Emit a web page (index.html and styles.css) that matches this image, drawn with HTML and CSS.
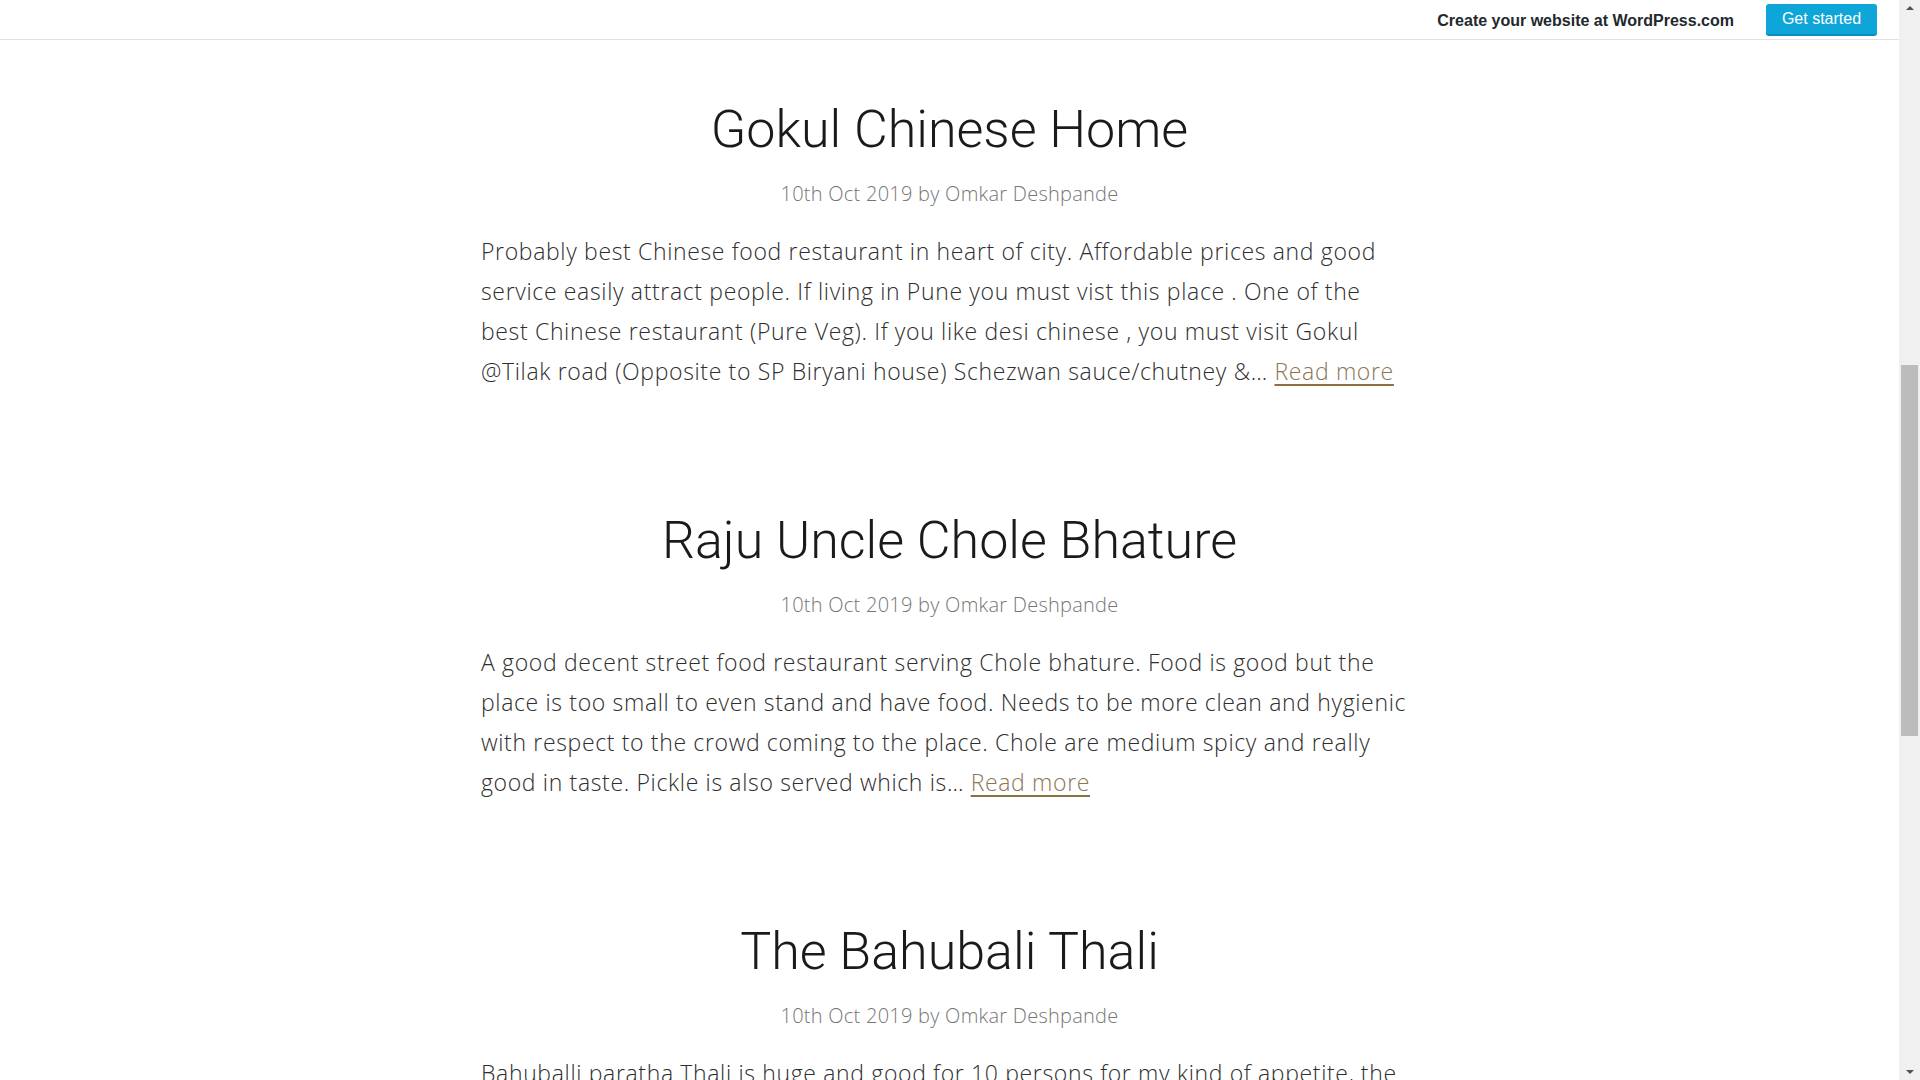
FILE: index.html
```html
<!DOCTYPE html>
<html lang="en">
<head>
<meta charset="utf-8">
<title>Omkar Deshpande – Food reviews</title>
<link rel="stylesheet" href="styles.css">
</head>
<body>
<div class="window">
  <div class="page">
    <header class="wpbar">
      <span class="wpbar-text">Create your website at WordPress.com</span>
      <a class="wpbar-btn" href="#">Get started</a>
    </header>
    <main class="posts">
      <article class="post">
        <h2 class="post-title">Gokul Chinese Home</h2>
        <div class="post-meta">10th Oct 2019 by Omkar Deshpande</div>
        <p class="post-excerpt">Probably best Chinese food restaurant in heart of city. Affordable prices and good service easily attract people. If living in Pune you must vist this place . One of the best Chinese restaurant (Pure Veg). If you like desi chinese , you must visit Gokul @Tilak road (Opposite to SP Biryani house) Schezwan sauce/chutney &amp;… <a class="more" href="#">Read more</a></p>
      </article>
      <article class="post">
        <h2 class="post-title">Raju Uncle Chole Bhature</h2>
        <div class="post-meta">10th Oct 2019 by Omkar Deshpande</div>
        <p class="post-excerpt">A good decent street food restaurant serving Chole bhature. Food is good but the place is too small to even stand and have food. Needs to be more clean and hygienic with respect to the crowd coming to the place. Chole are medium spicy and really good in taste. Pickle is also served which is… <a class="more" href="#">Read more</a></p>
      </article>
      <article class="post">
        <h2 class="post-title">The Bahubali Thali</h2>
        <div class="post-meta">10th Oct 2019 by Omkar Deshpande</div>
        <p class="post-excerpt">Bahuballi paratha Thali is huge and good for 10 persons for my kind of appetite, the Thali comes with many items and you can try it once with your friends… <a class="more" href="#">Read more</a></p>
      </article>
    </main>
  </div>
  <div class="scrollbar" aria-hidden="true">
    <div class="sb-arrow sb-up"></div>
    <div class="sb-track">
      <div class="sb-thumb"></div>
    </div>
    <div class="sb-arrow sb-down"></div>
  </div>
</div>
</body>
</html>
```

FILE: styles.css
```css
html, body {
  margin: 0;
  padding: 0;
  height: 100%;
  background: #fff;
}

.window {
  display: flex;
  height: 100vh;
  overflow: hidden;
}

.page {
  flex: 1;
  overflow: hidden;
  font-family: "Open Sans", Roboto, "Liberation Sans", sans-serif;
}

.wpbar {
  height: 39px;
  border-bottom: 1px solid #dce3e8;
  display: flex;
  align-items: center;
  justify-content: flex-end;
  padding-right: 22px;
  gap: 32px;
  font-family: "Liberation Sans", Arial, sans-serif;
}

.wpbar-text {
  font-size: 16px;
  font-weight: bold;
  color: #23282d;
  padding-top: 2px;
}

.wpbar-btn {
  display: block;
  width: 111px;
  height: 32px;
  box-sizing: border-box;
  line-height: 30px;
  text-align: center;
  background: #0ea6d9;
  border-bottom: 2px solid #0a8bbf;
  border-radius: 3px;
  color: #fff;
  font-size: 16px;
  text-decoration: none;
  margin-top: 1px;
}

.posts {
  width: 937px;
  margin: 0 auto;
  padding-top: 56px;
}

.post {
  margin-bottom: 116px;
}

.post-title {
  margin: 0;
  font-family: Roboto, "Open Sans", sans-serif;
  font-weight: 300;
  font-size: 52px;
  line-height: 68px;
  color: #1a1a1a;
  text-align: center;
}

.post-meta {
  margin-top: 15px;
  font-weight: 300;
  font-size: 20px;
  letter-spacing: 0.25px;
  line-height: 30px;
  color: #767676;
  text-align: center;
}

.post-excerpt {
  margin: 22px 0 0;
  padding-right: 8px;
  font-weight: 350;
  font-size: 23px;
  letter-spacing: 0.65px;
  line-height: 40px;
  color: #2e2e2e;
}

.more {
  color: #8c7654;
  text-decoration: underline;
  text-decoration-color: #8b7042;
  text-underline-offset: 4px;
  text-decoration-thickness: 2px;
}

.scrollbar {
  width: 21px;
  flex: none;
  background: #f0f0f0;
  display: flex;
  flex-direction: column;
}

.sb-arrow {
  height: 17px;
  display: flex;
  justify-content: center;
}

.sb-up::before,
.sb-down::before {
  content: "";
  width: 0;
  height: 0;
  border-left: 4px solid transparent;
  border-right: 4px solid transparent;
}

.sb-up::before {
  margin-top: 6px;
  border-bottom: 4px solid #505050;
}

.sb-down::before {
  margin-top: 7px;
  border-top: 4px solid #505050;
}

.sb-track {
  flex: 1;
  padding: 0 2px;
}

.sb-thumb {
  margin-top: 348px;
  height: 371px;
  background: #bcbcbc;
}
```
